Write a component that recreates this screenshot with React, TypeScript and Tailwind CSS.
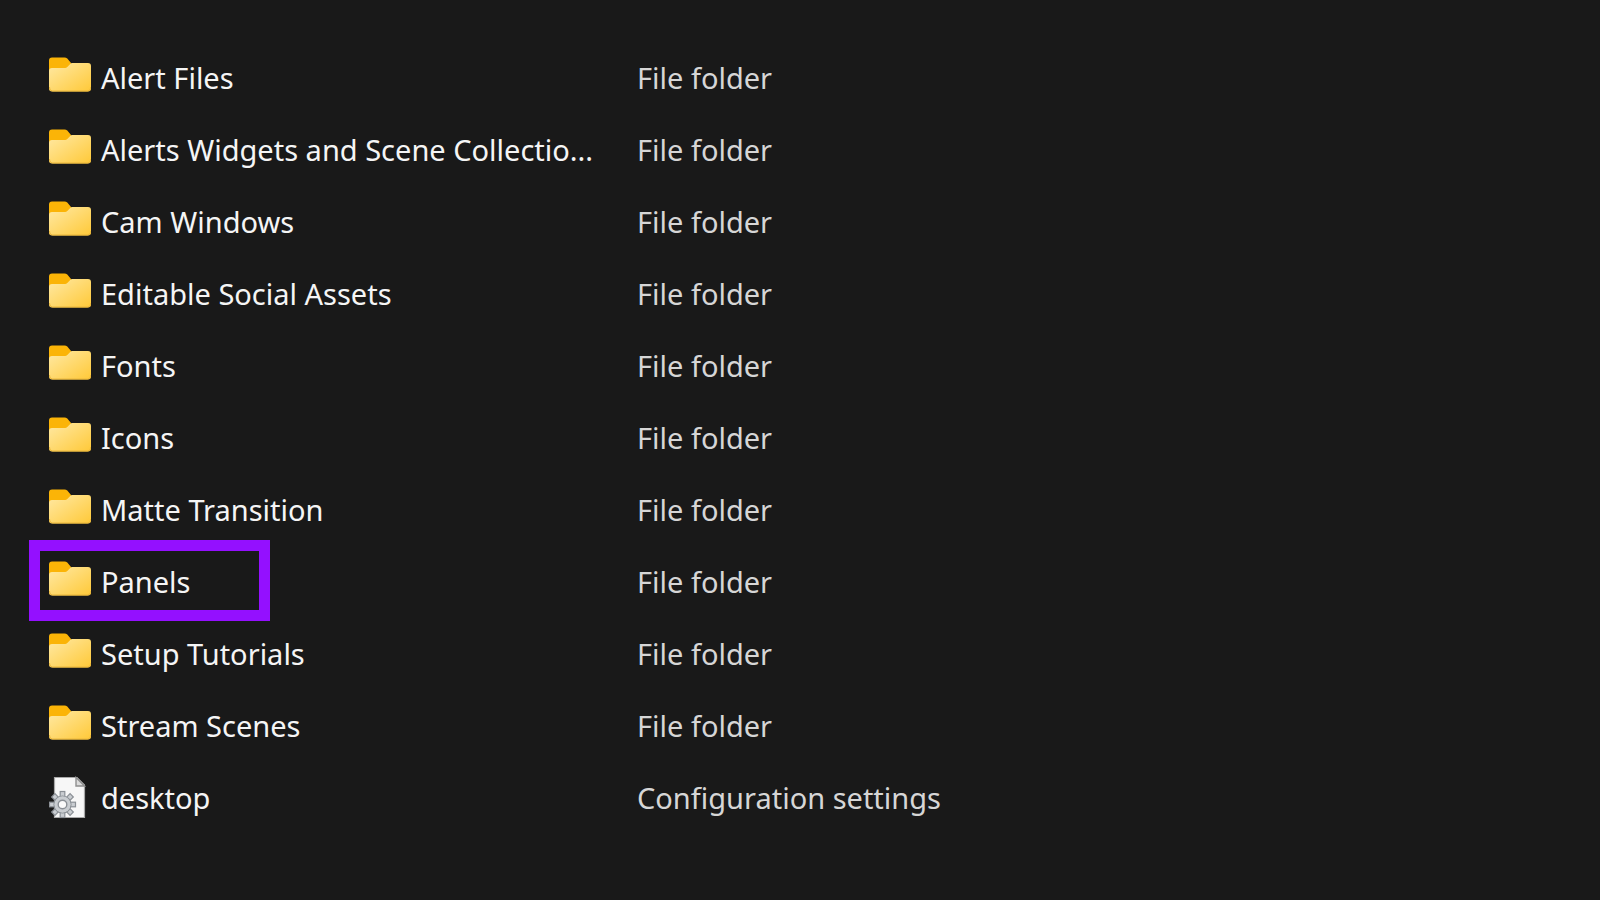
type Entry = { name: string; type: string; kind: 'folder' | 'config'; marked?: boolean };

const entries: Entry[] = [
  { name: 'Alert Files', type: 'File folder', kind: 'folder' },
  { name: 'Alerts Widgets and Scene Collectio...', type: 'File folder', kind: 'folder' },
  { name: 'Cam Windows', type: 'File folder', kind: 'folder' },
  { name: 'Editable Social Assets', type: 'File folder', kind: 'folder' },
  { name: 'Fonts', type: 'File folder', kind: 'folder' },
  { name: 'Icons', type: 'File folder', kind: 'folder' },
  { name: 'Matte Transition', type: 'File folder', kind: 'folder' },
  { name: 'Panels', type: 'File folder', kind: 'folder', marked: true },
  { name: 'Setup Tutorials', type: 'File folder', kind: 'folder' },
  { name: 'Stream Scenes', type: 'File folder', kind: 'folder' },
  { name: 'desktop', type: 'Configuration settings', kind: 'config' },
];

function FolderIcon() {
  return (
    <svg viewBox="0 3 42 44" className="h-11 w-[42px] shrink-0" aria-hidden="true">
      <defs>
        <linearGradient id="folder-front" x1="0" y1="0" x2="1" y2="1">
          <stop offset="0" stopColor="#ffe9a4" />
          <stop offset="1" stopColor="#ffc938" />
        </linearGradient>
      </defs>
      <path d="M0 7.500a3 3 0 0 1 3-3h12.500a4 4 0 0 1 2.800 1.100L22 10v9H0z" fill="#fbb407" />
      <path d="M0 18a3 3 0 0 1 3-3h12.500c1.200 0 2-.3 2.800-1.100l2.700-2.700c.8-.8 1.500-1.200 2.700-1.200H39a3 3 0 0 1 3 3v22.500a3 3 0 0 1-3 3H3a3 3 0 0 1-3-3z" fill="url(#folder-front)" />
      <path d="M.6 34v1a3 3 0 0 0 3 3h35a3 3 0 0 0 3-3v-1" fill="none" stroke="#eab73c" strokeWidth="1" />
    </svg>
  );
}

const teeth = [0, 45, 90, 135, 180, 225, 270, 315];

function ConfigIcon() {
  return (
    <svg viewBox="0 0 42 44" className="h-11 w-[42px] shrink-0" aria-hidden="true">
      <path d="M5.500 1.500H28l7.500 7.500V41.500H5.500z" fill="#f7f7f7" stroke="#a9a9a9" strokeWidth="1.200" />
      <path d="M27 1.500v8.500h8.500z" fill="#dcdcdc" stroke="#8f8f8f" strokeWidth="1.400" />
      <g fill="#c9cdd1" stroke="#8b9096" strokeWidth="1.200">
        {teeth.map((a) => (
          <rect key={a} x="11.200" y="15.500" width="4.600" height="7" transform={`rotate(${a} 13.500 28.500)`} />
        ))}
        <circle cx="13.500" cy="28.500" r="8.500" />
      </g>
      <circle cx="13.500" cy="28.500" r="8" fill="#c9cdd1" />
      <circle cx="13.500" cy="28.500" r="4.300" fill="#fafafa" stroke="#8b9096" strokeWidth="1.400" />
    </svg>
  );
}

export default function App() {
  return (
    <main className="min-h-screen bg-[#191919] pt-[42px] pl-[49px] font-['Noto_Sans','Open_Sans',sans-serif] text-[29px] leading-10">
      <table className="w-full table-fixed border-collapse text-left">
        <colgroup>
          <col className="w-[588px]" />
          <col />
        </colgroup>
        <tbody>
          {entries.map((e) => (
            <tr key={e.name} className="h-18">
              <th scope="row" className="relative p-0 font-normal whitespace-nowrap text-[#f5f5f5]">
                {e.marked && (
                  <span className="absolute -top-1.5 -left-5 h-[81px] w-[241px] border-[11px] border-[#9410ff]" />
                )}
                <div className="flex items-center gap-2.5">
                  {e.kind === 'folder' ? <FolderIcon /> : <ConfigIcon />}
                  <span>{e.name}</span>
                </div>
              </th>
              <td className="p-0 text-[#d6d6d6]">{e.type}</td>
            </tr>
          ))}
        </tbody>
      </table>
    </main>
  );
}
